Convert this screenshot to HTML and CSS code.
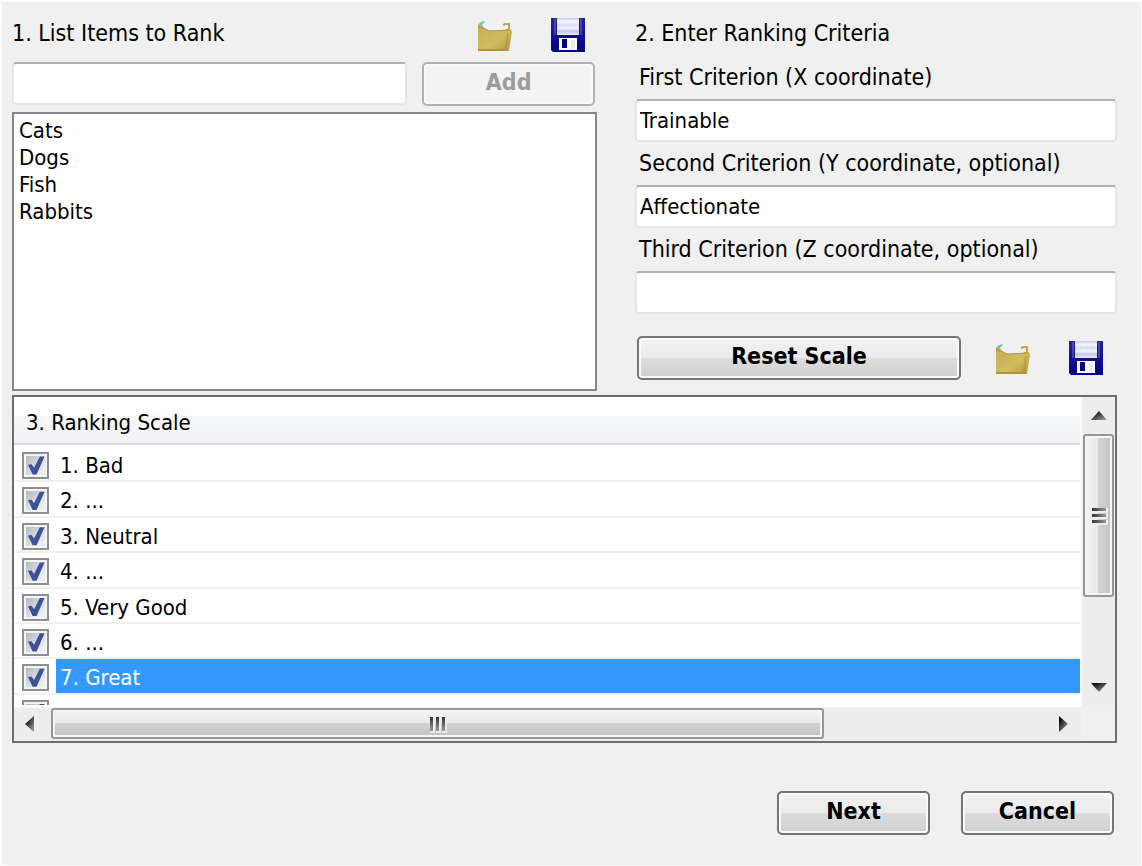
FILE: index.html
```html
<!DOCTYPE html>
<html lang="en">
<head>
<meta charset="utf-8">
<title>Ranking Setup</title>
<link rel="stylesheet" href="styles.css">
</head>
<body>
<svg class="defs" aria-hidden="true">
  <defs>
    <linearGradient id="gold" x1="0" y1="0" x2="1" y2="1">
      <stop offset="0" stop-color="#c9ae58"/><stop offset=".6" stop-color="#d2bc5f"/><stop offset="1" stop-color="#b39636"/>
    </linearGradient>
    <linearGradient id="shutter" x1="0" y1="0" x2="0" y2="1">
      <stop offset="0" stop-color="#c9c9ea"/><stop offset=".2" stop-color="#f4f4fc"/><stop offset=".42" stop-color="#dcdcf3"/><stop offset=".6" stop-color="#f4f4fc"/><stop offset=".78" stop-color="#c4c4e8"/><stop offset="1" stop-color="#ededf9"/>
    </linearGradient>
    <linearGradient id="shell" x1="0" y1="0" x2="0" y2="1">
      <stop offset="0" stop-color="#24249a"/><stop offset="1" stop-color="#000086"/>
    </linearGradient>
    <symbol id="folder" viewBox="0 0 36 36">
      <path d="M1 8l3-3 4 4h17l2-3h6v7l2 1-3 20H1z" fill="#c2a54c"/>
      <path d="M4 7l4-3 6 2 10 2 4 1 1 6-17-1-5-3z" fill="#eef1f5"/>
      <path d="M2 7l4-3 2 1-4 4z" fill="#6fcbc0"/>
      <path d="M28 8h3v4h-3z" fill="#f2f0e2"/>
      <path d="M1 9l7 3 4 2 22-1-3 21H1z" fill="url(#gold)"/>
      <path d="M1 10l7 2 4 2 22-1" fill="none" stroke="#b3953d"/>
      <path d="M31 16l-2 14-3 3" fill="none" stroke="#a98b30" stroke-width="2" opacity=".5"/>
      <path d="M1 33h30" stroke="#b0933a" stroke-width="2"/>
    </symbol>
    <symbol id="disk" viewBox="0 0 36 36">
      <path d="M0 1h34v34H2l-2-2z" fill="url(#shell)"/>
      <path d="M4 2v16M30 2v16" stroke="#6464b4" stroke-width="2" opacity=".6"/>
      <path d="M6 1h22v17H6z" fill="url(#shutter)"/>
      <path d="M8 21h18v12H8z" fill="#fff"/>
      <path d="M11 22h5v9h-5z" fill="#000086"/>
      <path d="M20 23h4v9h-4z" fill="#ebebed"/>
    </symbol>
    <linearGradient id="ink" x1="0" y1="0" x2="1" y2="1">
      <stop offset=".2" stop-color="#111"/><stop offset="1" stop-color="#aaa"/>
    </linearGradient>
    <symbol id="arrow-up" viewBox="0 0 16 10"><path d="M0 9L8 0l8 9z" fill="url(#ink)"/></symbol>
    <symbol id="arrow-down" viewBox="0 0 16 10"><path d="M0 1h16L8 10z" fill="url(#ink)"/></symbol>
    <symbol id="arrow-left" viewBox="0 0 10 16"><path d="M9 0v16L0 8z" fill="url(#ink)"/></symbol>
    <symbol id="arrow-right" viewBox="0 0 10 16"><path d="M1 0v16l9-8z" fill="url(#ink)"/></symbol>
  </defs>
</svg>
<form class="dialog">
  <div class="columns">
    <section class="items">
      <div class="title-row">
        <h2 id="items-title">1. List Items to Rank</h2>
        <div class="tools">
          <button type="button" class="icon-button" aria-label="Open items"><svg class="icon"><use href="#folder"/></svg></button>
          <button type="button" class="icon-button" aria-label="Save items"><svg class="icon"><use href="#disk"/></svg></button>
        </div>
      </div>
      <div class="add-row">
        <input class="field" type="text" aria-label="New item">
        <button type="button" class="button" disabled>Add</button>
      </div>
      <select class="listbox" multiple aria-labelledby="items-title">
        <option>Cats</option>
        <option>Dogs</option>
        <option>Fish</option>
        <option>Rabbits</option>
      </select>
    </section>
    <section class="criteria">
      <h2>2. Enter Ranking Criteria</h2>
      <label for="first">First Criterion (X coordinate)</label>
      <input class="field" id="first" type="text" value="Trainable">
      <label for="second">Second Criterion (Y coordinate, optional)</label>
      <input class="field" id="second" type="text" value="Affectionate">
      <label for="third">Third Criterion (Z coordinate, optional)</label>
      <input class="field" id="third" type="text">
      <div class="reset-row">
        <button type="button" class="button">Reset Scale</button>
        <div class="tools">
          <button type="button" class="icon-button" aria-label="Open scale"><svg class="icon"><use href="#folder"/></svg></button>
          <button type="button" class="icon-button" aria-label="Save scale"><svg class="icon"><use href="#disk"/></svg></button>
        </div>
      </div>
    </section>
  </div>
  <section class="scale">
    <div class="scale-view">
      <h2 class="scale-head">3. Ranking Scale</h2>
      <div class="scale-clip">
        <ul class="scale-rows">
          <li><label><input type="checkbox" checked><span>1. Bad</span></label></li>
          <li><label><input type="checkbox" checked><span>2. ...</span></label></li>
          <li><label><input type="checkbox" checked><span>3. Neutral</span></label></li>
          <li><label><input type="checkbox" checked><span>4. ...</span></label></li>
          <li><label><input type="checkbox" checked><span>5. Very Good</span></label></li>
          <li><label><input type="checkbox" checked><span>6. ...</span></label></li>
          <li class="selected"><label><input type="checkbox" checked><span>7. Great</span></label></li>
          <li><input type="checkbox" checked aria-label="Item 8"></li>
        </ul>
      </div>
    </div>
    <div class="bar bar-v">
      <svg class="arrow-v"><use href="#arrow-up"/></svg>
      <div class="track"><div class="thumb"><i></i><i></i><i></i></div></div>
      <svg class="arrow-v"><use href="#arrow-down"/></svg>
    </div>
    <div class="bar bar-h">
      <svg class="arrow-h"><use href="#arrow-left"/></svg>
      <div class="track"><div class="thumb"><i></i><i></i><i></i></div></div>
      <svg class="arrow-h"><use href="#arrow-right"/></svg>
    </div>
    <div class="corner"></div>
  </section>
  <div class="actions">
    <button type="button" class="button">Next</button>
    <button type="button" class="button">Cancel</button>
  </div>
</form>
</body>
</html>
```
FILE: styles.css
```css
* { box-sizing: border-box; }

body {
  margin: 0;
  min-height: 100vh;
  background: #f0f0f0;
  border: solid #fcfcfc;
  border-width: 2px 1px 1px 2px;
  color: #000;
  font: 22px/27px "DejaVu Sans Condensed", "DejaVu Sans", Tahoma, sans-serif;
}

.defs { position: absolute; width: 0; height: 0; }

.dialog { padding: 10px 24px 0 10px; }

h2 { margin: 0; font-size: 23px; font-weight: 400; line-height: 42px; }

.columns {
  display: grid;
  grid-template-columns: 585fr 482fr;
  column-gap: 38px;
  height: 379px;
}

.items, .criteria { display: flex; flex-direction: column; min-width: 0; }

.title-row, .add-row, .reset-row, .tools, .actions { display: flex; }
.title-row { justify-content: space-between; height: 50px; }
.title-row .tools { padding: 5px 10px 0 0; }
.tools { gap: 38px; }

.icon-button { padding: 0; border: 0; background: none; height: 36px; }
.icon { display: block; width: 36px; height: 36px; }

.field {
  width: 100%;
  min-width: 0;
  height: 43px;
  padding: 0 3px 1px;
  border: 2px solid #e2e6ee;
  border-top-color: #b0b2b8;
  border-radius: 4px;
  background: #fff;
  color: inherit;
  font: inherit;
}

.button {
  height: 44px;
  padding: 0 0 3px;
  border: 2px solid #757575;
  border-radius: 5px;
  background: linear-gradient(#f2f2f2, #ebebeb 49%, #dddddd 50%, #cfcfcf);
  box-shadow: inset 0 0 0 2px #f9f9f9;
  color: #000;
  font: 700 23px/27px "DejaVu Sans Condensed", "DejaVu Sans", Tahoma, sans-serif;
}
.button:disabled { border-color: #adb2b5; background: #f4f4f4; color: #9c9c9c; }

.add-row { gap: 15px; padding-right: 2px; margin-bottom: 6px; }
.add-row .field { flex: 395; }
.add-row .button { flex: 173; }

.listbox {
  flex: 1;
  width: 100%;
  padding: 4px 2px;
  border: 2px solid #828790;
  border-radius: 0;
  background: #fff;
  color: inherit;
  font: inherit;
  overflow: hidden;
}
.listbox option { padding: 0 3px; min-height: 27px; line-height: 27px; }

.criteria label { padding-left: 4px; font-size: 23px; line-height: 43px; }
.criteria h2 { margin-bottom: 2px; }
.reset-row { align-items: center; justify-content: space-between; gap: 34px; padding: 22px 12px 0 2px; }
.reset-row .button { flex: 1; }

.scale {
  display: grid;
  grid-template: 310px 34px / 1fr 34px;
  margin-top: 4px;
  border: 2px solid #6d6f6d;
  background: #fff;
}
.scale-view { display: flex; flex-direction: column; min-width: 0; min-height: 0; padding-right: 1px; }
.scale-head {
  height: 48px;
  padding: 5px 12px 0;
  border-bottom: 2px solid #d8dadd;
  background: linear-gradient(#fff 40%, #f6f7f9 42%, #f1f3f5);
  font-size: 22px;
}
.scale-clip { height: 260px; overflow: hidden; }
.scale-rows { display: flex; flex-direction: column; height: 285px; margin: 0; padding: 2px 0 0; list-style: none; }
.scale-rows li { flex: 1; border-bottom: 2px solid #f0f0f0; padding-left: 8px; }
.scale-rows label { display: flex; height: 100%; }
.scale-rows span { flex: 1; padding: 5px 0 0 4px; margin-left: 7px; }
.selected span { background: #3399ff; color: #fff; }

.scale-rows input {
  appearance: none;
  width: 27px;
  height: 27px;
  margin: 5px 0 0;
  border: 2px solid #8e8f8f;
  background:
    linear-gradient(135deg, #b4b9c1, #eceef0 80%) center / 19px 19px no-repeat,
    #f4f4f4;
  display: grid;
  place-items: center;
}
.scale-rows input::before {
  content: "";
  width: 18px;
  height: 19px;
  background: #3b5299;
  clip-path: polygon(8% 46%, 28% 44%, 42% 62%, 74% 2%, 100% 2%, 56% 98%, 34% 98%);
}

.bar { display: flex; align-items: center; background: #ededed; }
.bar .track { flex: 1; }
.arrow-v { width: 16px; height: 10px; flex: none; }
.arrow-h { width: 10px; height: 16px; flex: none; }
.bar-v { flex-direction: column; padding: 14px 0 15px; gap: 13px; border-left: 2px solid #f3f3f3; }
.bar-v .track { width: 31px; margin-right: 1px; }
.bar-h { padding: 0 13px 2px 11px; gap: 16px; border-top: 1px solid #f3f3f3; }
.bar-h .track { height: 31px; }
.corner { background: #f0f0f0; }

.thumb {
  display: flex;
  align-items: center;
  justify-content: center;
  gap: 3px;
  border: 2px solid #979797;
  border-radius: 3px;
  box-shadow: inset 0 0 0 2px #f6f6f6;
}
.bar-v .thumb { flex-direction: column; height: 163px; background: linear-gradient(90deg, #f4f4f4, #e8e8e9 47%, #d2d2d5 50%, #c3c3c6); }
.bar-h .thumb { width: 78%; height: 31px; background: linear-gradient(#f4f4f4, #e8e8e9 47%, #d2d2d5 50%, #c3c3c6); }
.thumb i { box-shadow: 1px 1px 0 1px #ececec; }
.bar-v i { width: 14px; height: 3px; background: linear-gradient(90deg, #333, #999); }
.bar-h i { width: 3px; height: 14px; background: linear-gradient(#333, #999); }

.actions { justify-content: flex-end; gap: 31px; padding: 48px 3px 0 0; }
.actions .button { width: 153px; }
```
